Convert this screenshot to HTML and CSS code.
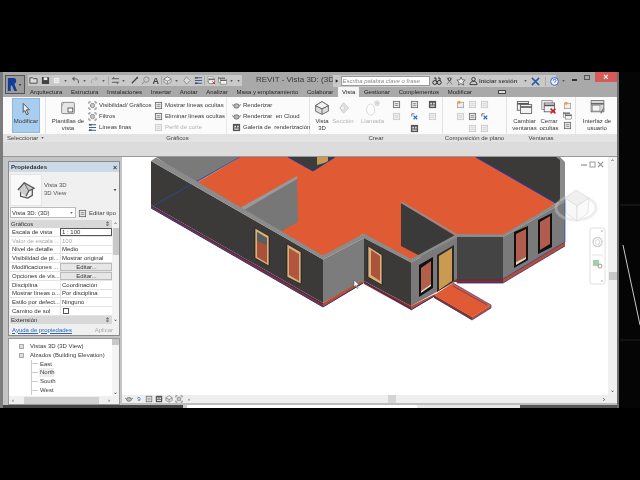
FILE: index.html
```html
<!DOCTYPE html>
<html lang="es">
<head>
<meta charset="utf-8">
<title>REVIT - Vista 3D: (3D)</title>
<link rel="stylesheet" href="styles.css">
</head>
<body>
<svg class="defs" width="0" height="0">
  <defs>
    <symbol id="i-doc" viewBox="0 0 10 10"><rect x="1.5" y="1.5" width="7" height="7" fill="#e8e8e8" stroke="#666" stroke-width=".9"/><path d="M3 4h4M3 6h4" stroke="#777" stroke-width=".8"/></symbol>
    <symbol id="i-dim" viewBox="0 0 10 10"><rect x="1.5" y="1.5" width="7" height="7" fill="#eee" stroke="#c8c8c8" stroke-width=".9"/><path d="M3 4h4M3 6h4" stroke="#d0d0d0" stroke-width=".8"/></symbol>
    <symbol id="i-list" viewBox="0 0 10 10"><path d="M1 2h8M1 5h8M1 8h8" stroke="#3f5f8f" stroke-width="1.2"/><path d="M1 2h3M1 8h3" stroke="#444" stroke-width="1.4"/></symbol>
    <symbol id="i-scan" viewBox="0 0 10 10"><path d="M1 3V1h2M7 1h2v2M9 7v2H7M3 9H1V7" fill="none" stroke="#666" stroke-width=".9"/><circle cx="5" cy="5" r="2.4" fill="#c9c9c9" stroke="#666" stroke-width=".7"/></symbol>
    <symbol id="i-teapot" viewBox="0 0 10 10"><ellipse cx="5" cy="5.5" rx="3" ry="2.4" fill="#bbb" stroke="#555" stroke-width=".8"/><path d="M8 5l2-1M2 5L0 4" stroke="#555" stroke-width=".8"/></symbol>
    <symbol id="i-gallery" viewBox="0 0 10 10"><rect x="1" y="1" width="8" height="8" fill="#555"/><path d="M2.5 3h2v2h-2zM5.5 3h2v2h-2zM2.5 6h5v1.5h-5z" fill="#ddd"/></symbol>
    <symbol id="i-arrow" viewBox="0 0 10 10"><path d="M3 1l4.5 4.6H5.3l1.4 3-1.2.5-1.3-3L3 7.4z" fill="#e8f0f8" stroke="#555" stroke-width=".7"/></symbol>
    <symbol id="i-caret" viewBox="0 0 6 6"><path d="M1.5 2.2h3L3 4z" fill="#333"/></symbol>
    <symbol id="i-win" viewBox="0 0 20 20"><rect x="1" y="3" width="14" height="11" fill="#f0f0f0" stroke="#555"/><path d="M1 6h14" stroke="#555" stroke-width="2"/><rect x="5" y="7" width="14" height="11" fill="#f4f4f4" stroke="#555"/><path d="M5 10h14" stroke="#555" stroke-width="2"/></symbol>
    <symbol id="i-winx" viewBox="0 0 20 20"><rect x="1" y="2" width="13" height="11" fill="#eee" stroke="#888"/><rect x="4" y="5" width="13" height="11" fill="#f2f2f2" stroke="#555"/><path d="M4 8h13" stroke="#555" stroke-width="2"/><path d="M12 12l6 6M18 12l-6 6" stroke="#c8282a" stroke-width="2"/></symbol>
    <symbol id="i-ui" viewBox="0 0 20 20"><rect x="2" y="2" width="16" height="14" fill="#d8d8d8" stroke="#666"/><path d="M2 6h16" stroke="#666" stroke-width="2"/><rect x="4" y="8" width="9" height="7" fill="#f4f4f4" stroke="#888" stroke-width=".7"/><path d="M14 18l4-7" stroke="#777" stroke-width="1.4"/></symbol>
    <symbol id="i-tpl" viewBox="0 0 20 20"><rect x="2" y="3" width="16" height="14" rx="1.5" fill="#e6e6e6" stroke="#777"/><path d="M2 8l3-5" stroke="#999"/><rect x="10" y="10" width="6" height="5" fill="#fff" stroke="#444"/></symbol>
    <symbol id="i-house" viewBox="0 0 20 20"><path d="M10 2L18 7 18 14 10 18 2 14 2 7z" fill="#dcdcdc" stroke="#555"/><path d="M2 7l8 4 8-4M10 11v7" fill="none" stroke="#555"/><path d="M10 2L18 7l-8 4-8-4z" fill="#f2f2f2" stroke="#555"/></symbol>
    <symbol id="i-home" viewBox="0 0 20 20"><path d="M4 10v7l8 2 5-3V9" fill="#f0f0f0" stroke="#555" stroke-width="1.400"/><path d="M1 10l7-8 11 6-6 3-3 6" fill="#ccc" stroke="#555" stroke-width="1.400"/><path d="M8 2l5 9" stroke="#555"/></symbol>
    <symbol id="i-ghost" viewBox="0 0 20 20"><path d="M10 3l7 7-7 7-5-7z" fill="#e4e4e4" stroke="#c4c4c4"/><circle cx="9" cy="10" r="3" fill="#f2f2f2" stroke="#c8c8c8"/></symbol>
    <symbol id="i-call" viewBox="0 0 20 20"><ellipse cx="7" cy="12" rx="5" ry="7" fill="#fff" stroke="#cfcfcf"/><circle cx="15" cy="4" r="3" fill="#eee" stroke="#cfcfcf"/><path d="M13 4h4M15 2v4" stroke="#bbb" stroke-width=".7"/></symbol>
    <symbol id="i-sun" viewBox="0 0 10 10"><rect x="1.5" y="2.5" width="7" height="6" fill="#eee" stroke="#999" stroke-width=".8"/><circle cx="3.5" cy="2.5" r="1.8" fill="#f0a030"/></symbol>
    <symbol id="i-xblue" viewBox="0 0 10 10"><path d="M2 2h3M2 2v3" stroke="#666" stroke-width="1"/><path d="M4 4l4 4M8 4l-4 4" stroke="#2b6fc4" stroke-width="1.4"/></symbol>
  </defs>
</svg>

<div class="screen">
  <div class="window">
    <div class="titlebar">
      <div class="appbtn">
        <svg class="applogo" viewBox="0 0 12 16" width="11" height="15"><path d="M1 15V1h6.5c3 0 3.5 5 .5 6.5l3 7.5H8L5.5 9H4v6z" fill="#123c9c"/></svg>
        <svg class="cr" width="6" height="6"><use href="#i-caret"/></svg>
      </div>
      <div class="qat">
        <svg class="qi" width="9" height="9" viewBox="0 0 10 10"><path d="M1 8V2h3l1 1h4v5z" fill="#ddd" stroke="#444"/></svg>
        <svg class="qi" width="9" height="9" viewBox="0 0 10 10"><path d="M1 1h7l1 1v7H1z" fill="#444"/><rect x="3" y="1.5" width="4" height="3" fill="#eee"/></svg>
        <svg class="qi" width="9" height="9"><use href="#i-dim"/></svg>
        <svg class="qc" width="5" height="6"><use href="#i-caret"/></svg>
        <svg class="qi" width="9" height="9" viewBox="0 0 10 10"><path d="M8 8a4 3.5 0 0 0-4-5H2M4 1L1.8 3 4 5" fill="none" stroke="#666" stroke-width="1.2"/></svg>
        <svg class="qc" width="5" height="6"><use href="#i-caret"/></svg>
        <svg class="qi" width="9" height="9" viewBox="0 0 10 10"><path d="M2 8a4 3.5 0 0 1 4-5h2M6 1l2.200 2L6 5" fill="none" stroke="#aaa" stroke-width="1.200"/></svg>
        <svg class="qc" width="5" height="6"><use href="#i-caret"/></svg>
        <span class="qsep"></span>
        <svg class="qi" width="9" height="9" viewBox="0 0 10 10"><path d="M1 3h8M1 7h8M3 1v2M7 7v2" stroke="#555"/></svg>
        <svg class="qc" width="5" height="6"><use href="#i-caret"/></svg>
        <svg class="qi" width="9" height="9" viewBox="0 0 10 10"><path d="M2 8l6-6" stroke="#444" stroke-width="1.400"/><circle cx="8" cy="2" r="1.200" fill="#555"/></svg>
        <svg class="qi" width="9" height="9" viewBox="0 0 10 10"><circle cx="6" cy="4" r="3" fill="none" stroke="#888"/><path d="M1 9l3-3" stroke="#888"/></svg>
        <span class="qa">A</span>
        <span class="qsep"></span>
        <svg class="qi" width="9" height="9"><use href="#i-house"/></svg>
        <svg class="qc" width="5" height="6"><use href="#i-caret"/></svg>
        <svg class="qi" width="9" height="9" viewBox="0 0 10 10"><path d="M5 1l4 4-4 4-3-4z" fill="#ddd" stroke="#888"/></svg>
        <svg class="qi" width="9" height="9"><use href="#i-list"/></svg>
        <span class="qsep"></span>
        <svg class="qi" width="9" height="9"><use href="#i-winx"/></svg>
        <svg class="qi" width="9" height="9"><use href="#i-win"/></svg>
        <svg class="qc" width="5" height="6"><use href="#i-caret"/></svg>
        <svg class="qc" width="5" height="6"><use href="#i-caret"/></svg>
      </div>
      <div class="wintitle">REVIT - Vista 3D: (3D)</div>
      <div class="infobar">
        <svg class="cr" width="5" height="6" viewBox="0 0 6 6"><path d="M2 1l3 2-3 2z" fill="#222"/></svg>
        <div class="search">Escriba palabra clave o frase</div>
        <svg class="qi" width="10" height="10" viewBox="0 0 10 10"><circle cx="2.800" cy="6.500" r="2" fill="none" stroke="#333"/><circle cx="7.200" cy="6.500" r="2" fill="none" stroke="#333"/><path d="M2 2h2v3M6 2h2v3" stroke="#333" fill="none"/></svg>
        <svg class="qi" width="9" height="10" viewBox="0 0 10 10"><path d="M2 1l6 8M8 1L2 9" stroke="#777"/><circle cx="5" cy="3" r="1.600" fill="none" stroke="#444"/></svg>
        <svg class="qi" width="10" height="10" viewBox="0 0 10 10"><path d="M5 1l1.200 2.800 3 .3-2.300 2 .7 3L5 7.500 2.400 9.100l.7-3-2.300-2 3-.3z" fill="#f2f2f2" stroke="#555" stroke-width=".8"/></svg>
        <svg class="qi" width="9" height="10" viewBox="0 0 10 10"><circle cx="5" cy="3" r="2" fill="none" stroke="#333"/><path d="M1 9c0-5 8-5 8 0z" fill="none" stroke="#333"/></svg>
        <span class="login">Iniciar sesión</span>
        <svg class="qc" width="5" height="6"><use href="#i-caret"/></svg>
        <svg class="qi" width="9" height="9" viewBox="0 0 10 10"><path d="M1 1l8 8M9 1L1 9" stroke="#2f5fa8" stroke-width="1.800"/></svg>
        <span class="qsep qsep-info"></span>
        <svg class="qi" width="9" height="9" viewBox="0 0 10 10"><circle cx="5" cy="5" r="4.300" fill="#eef" stroke="#2a62b8"/><path d="M3.600 4c0-2 3-2 3 0 0 1-1.500 1-1.500 2.200" fill="none" stroke="#2a62b8"/></svg>
        <svg class="qc" width="5" height="6"><use href="#i-caret"/></svg>
      </div>
      <div class="controls">
        <span class="ctl-min"></span>
        <span class="ctl-max"></span>
        <span class="ctl-close">×</span>
      </div>
    </div>

    <nav class="tabs">
      <span class="tab">Arquitectura</span>
      <span class="tab">Estructura</span>
      <span class="tab">Instalaciones</span>
      <span class="tab">Insertar</span>
      <span class="tab">Anotar</span>
      <span class="tab">Analizar</span>
      <span class="tab">Masa y emplazamiento</span>
      <span class="tab">Colaborar</span>
      <span class="tab tab-active">Vista</span>
      <span class="tab">Gestionar</span>
      <span class="tab">Complementos</span>
      <span class="tab">Modificar</span>
      <span class="tabbtn"></span>
    </nav>

    <div class="ribbon">
      <section class="panel p-sel">
        <div class="tools">
          <div class="big big-active">
            <svg width="14" height="14"><use href="#i-arrow"/></svg>
            <span>Modificar</span>
          </div>
        </div>
        <div class="plabel pl-left">Seleccionar <svg width="5" height="6"><use href="#i-caret"/></svg></div>
      </section>

      <section class="panel p-gra">
        <div class="tools">
          <div class="big big-tpl">
            <svg width="18" height="16"><use href="#i-tpl"/></svg>
            <span>Plantillas de<br>vista</span>
          </div>
          <div class="col c1">
            <div class="row"><svg width="9" height="9"><use href="#i-scan"/></svg>Visibilidad/ Gráficos</div>
            <div class="row"><svg width="9" height="9"><use href="#i-scan"/></svg>Filtros</div>
            <div class="row"><svg width="9" height="9"><use href="#i-list"/></svg>Líneas finas</div>
          </div>
          <div class="col c2">
            <div class="row"><svg width="9" height="9"><use href="#i-doc"/></svg>Mostrar líneas ocultas</div>
            <div class="row"><svg width="9" height="9"><use href="#i-doc"/></svg>Eliminar líneas ocultas</div>
            <div class="row dis"><svg width="9" height="9"><use href="#i-dim"/></svg>Perfil de corte</div>
          </div>
          <div class="col c3">
            <div class="row"><svg width="9" height="9"><use href="#i-teapot"/></svg>Renderizar</div>
            <div class="row"><svg width="9" height="9"><use href="#i-teapot"/></svg>Renderizar &nbsp;en Cloud</div>
            <div class="row"><svg width="9" height="9"><use href="#i-gallery"/></svg>Galería de &nbsp;renderización</div>
          </div>
        </div>
        <div class="plabel">Gráficos</div>
      </section>

      <section class="panel p-cre">
        <div class="tools">
          <div class="big big-3d"><svg width="16" height="16"><use href="#i-house"/></svg><span>Vista<br>3D</span></div>
          <div class="big big-sec dis"><svg width="15" height="16"><use href="#i-ghost"/></svg><span>Sección</span></div>
          <div class="big big-call dis"><svg width="16" height="16"><use href="#i-call"/></svg><span>Llamada</span></div>
          <div class="igrid ig-cre">
            <svg width="9" height="9"><use href="#i-doc"/></svg>
            <svg width="9" height="9"><use href="#i-doc"/></svg>
            <svg width="9" height="9"><use href="#i-gallery"/></svg>
            <svg width="9" height="9"><use href="#i-dim"/></svg>
            <svg width="9" height="9"><use href="#i-xblue"/></svg>
            <svg width="9" height="9"><use href="#i-dim"/></svg>
            <span></span>
            <svg width="9" height="9"><use href="#i-gallery"/></svg>
            <span></span>
          </div>
        </div>
        <div class="plabel">Crear</div>
      </section>

      <section class="panel p-com">
        <div class="tools">
          <div class="igrid ig-com">
            <svg width="9" height="9"><use href="#i-sun"/></svg>
            <svg width="9" height="9"><use href="#i-dim"/></svg>
            <svg width="9" height="9"><use href="#i-dim"/></svg>
            <svg width="9" height="9"><use href="#i-dim"/></svg>
            <svg width="9" height="9"><use href="#i-doc"/></svg>
            <svg width="9" height="9"><use href="#i-xblue"/></svg>
            <span></span>
            <svg width="9" height="9"><use href="#i-dim"/></svg>
            <svg width="9" height="9"><use href="#i-dim"/></svg>
          </div>
        </div>
        <div class="plabel">Composición de plano</div>
      </section>

      <section class="panel p-ven">
        <div class="tools">
          <div class="big big-cam"><svg width="17" height="16"><use href="#i-win"/></svg><span>Cambiar<br>ventanas</span></div>
          <div class="big big-cer"><svg width="16" height="16"><use href="#i-winx"/></svg><span>Cerrar<br>ocultas</span></div>
          <div class="col c-ven">
            <svg width="9" height="9"><use href="#i-sun"/></svg>
            <svg width="9" height="9"><use href="#i-win"/></svg>
            <svg width="9" height="9"><use href="#i-doc"/></svg>
          </div>
        </div>
        <div class="plabel">Ventanas</div>
      </section>

      <section class="panel p-int">
        <div class="tools">
          <div class="big big-int"><svg width="17" height="16"><use href="#i-ui"/></svg><span>Interfaz de<br>usuario</span></div>
        </div>
        <div class="plabel"></div>
      </section>
    </div>

    <div class="ctxstrip"></div>

    <div class="workspace">
      <aside class="sidebar">
        <div class="props">
          <div class="props-head"><b>Propiedades</b><span class="x">×</span></div>
          <div class="preview">
            <div class="tile"><svg width="18" height="18"><use href="#i-home"/></svg></div>
            <div class="pv-text">Vista 3D<br>3D View</div>
            <svg class="pv-caret" width="6" height="6"><use href="#i-caret"/></svg>
          </div>
          <div class="typeline">
            <div class="select">Vista 3D: (3D)<svg width="5" height="6"><use href="#i-caret"/></svg></div>
            <div class="edittype"><svg width="9" height="9"><use href="#i-doc"/></svg>Editar tipo</div>
          </div>
          <div class="grid-wrap">
            <div class="params">
              <div class="section">Gráficos<span>⇕</span></div>
              <div class="param"><span>Escala de vista</span><span class="val val-input">1 : 100</span></div>
              <div class="param dis"><span>Valor de escala ...</span><span class="val">100</span></div>
              <div class="param"><span>Nivel de detalle</span><span class="val">Medio</span></div>
              <div class="param"><span>Visibilidad de pi...</span><span class="val">Mostrar original</span></div>
              <div class="param"><span>Modificaciones ...</span><span class="val val-btn">Editar...</span></div>
              <div class="param"><span>Opciones de vis...</span><span class="val val-btn">Editar...</span></div>
              <div class="param"><span>Disciplina</span><span class="val">Coordinación</span></div>
              <div class="param"><span>Mostrar líneas o...</span><span class="val">Por disciplina</span></div>
              <div class="param"><span>Estilo por defect...</span><span class="val">Ninguno</span></div>
              <div class="param"><span>Camino de sol</span><span class="val"><i class="check"></i></span></div>
              <div class="section">Extensión<span>⇕</span></div>
            </div>
            <div class="pscroll"><span class="up">⌃</span><span class="thumb"></span><span class="down">⌄</span></div>
          </div>
          <div class="helpline"><a>Ayuda de propiedades</a><span class="apply">Aplicar</span></div>
        </div>
        <div class="browser">
          <div class="tree-wrap">
            <ul class="tree">
              <li class="l1"><i class="plus"></i>Vistas 3D (3D View)</li>
              <li class="l1"><i class="plus"></i>Alzados (Building Elevation)</li>
              <li class="l2">East</li>
              <li class="l2 sel">North</li>
              <li class="l2">South</li>
              <li class="l2">West</li>
            </ul>
            <div class="bscroll"><span class="bthumb"></span><span class="down">⌄</span></div>
          </div>
          <div class="hscroll"><span>‹</span><i></i><span>›</span></div>
        </div>
      </aside>

      <main class="viewarea">
        <div class="viewrow">
          <svg class="model" width="486" height="238" viewBox="122 157 486 238">
            <!-- back-left room -->
            <polygon points="156,157 240,157 195,184" fill="#7a7a7a"/>
            <!-- floor -->
            <polygon points="195,184 240,157 476,157 557,203 503,236 457,236 411,262 363,234 323,259" fill="#e05a33"/>
            <!-- inset at the back -->
            <polygon points="288,157 335,157 313,171" fill="#3c3c3c"/>
            <polygon points="317,157 328,157 328,162 317,165" fill="#c49a55"/>
            <path d="M288,157 313,171 335,157" fill="none" stroke="#1d3a96" stroke-width="1"/>
            <!-- back-right wall -->
            <polygon points="476,157 560,157 560,202 556,203" fill="#3b3a39"/>
            <path d="M476,157 556,203" stroke="#1d3a96" stroke-width="1.200"/>
            <polygon points="556,157 560,157 565,162 565,198 560,202 560,160" fill="#8a8a8a"/>
            <!-- inner walls -->
            <polygon points="240,208 297,177 298,222 280,232" fill="#777"/>
            <polygon points="240,208 297,176 297,179 244,210" fill="#9a9a9a"/>
            <polygon points="401,203 457,237 422,257 401,246" fill="#3a3a3a"/>
            <path d="M401,202 457,235" stroke="#8f8f8f" stroke-width="2"/>
            <!-- left big wall -->
            <polygon points="151,161 323,259.500 323,303 151,205" fill="#3b3a39"/>
            <polygon points="151,205 323,303 323,307 151,208" fill="#8e2f1f"/>
            <path d="M151,206 323,304M151,208 323,307" stroke="#1d2f8e" stroke-width=".9" fill="none"/>
            <!-- blue line over left room -->
            <path d="M151,207 240,157" stroke="#2a4ba8" stroke-width=".8" fill="none"/>
            <!-- wall top stripe -->
            <polygon points="151,161 156,157.500 323,255.500 364,233.500 411,259 457,234 503,234.500 565,198 565,201.500 503,237 457,237 411,262.500 364,238 323,259.500" fill="#8b8b8b"/>
            <!-- gray face -->
            <polygon points="323,259.500 364,238 364,281 323,303" fill="#7c7c7c"/>
            <polygon points="323,303 356,284 364,281 364,283 323,307" fill="#c2492a"/>
            <path d="M323,307 363,283" stroke="#1d3a96" stroke-width="1"/>
            <!-- next dark face -->
            <polygon points="364,238 411,262.500 411,306 364,281" fill="#3b3a39"/>
            <polygon points="364,281 411,306 411,310 364,284" fill="#8e2f1f"/>
            <path d="M364,282 411,309" stroke="#1d2f8e" stroke-width="1"/>
            <!-- door face -->
            <polygon points="411,262.500 457,237 457,281 411,306" fill="#7a7a7a"/>
            <polygon points="411,306 435,294 434,297 411,310" fill="#c2492a"/>
            <path d="M411,310 434,296" stroke="#1d3a96" stroke-width="1"/>
            <!-- octagon faces -->
            <polygon points="457,237 503,237 503,279 457,279" fill="#444"/>
            <polygon points="453,281 457,279 503,279 503,283 458,283" fill="#8e2f1f"/>
            <path d="M457,280 503,280M457,283 503,283" stroke="#1d2f8e" stroke-width=".8"/>
            <polygon points="503,237 565,201.500 565,242 503,279" fill="#7a7a7a"/>
            <polygon points="503,279 565,242 565,246 503,283" fill="#c2492a"/>
            <path d="M503,279 565,242M503,283 565,246" stroke="#1d3a96" stroke-width=".8"/>
            <path d="M565,199V242" stroke="#2a4ba8" stroke-width=".7"/>
            <!-- windows -->
            <polygon points="255,228 269,236 269,266 255,258" fill="#d8b27a" stroke="#111" stroke-width=".6"/>
            <polygon points="257,232 267,238 267,263 257,257" fill="#a9513c"/>
            <polygon points="257,232 267,238 267,245 257,241" fill="#55605f"/>
            <polygon points="287,244 301,252 301,284 287,277" fill="#d8b27a" stroke="#111" stroke-width=".6"/>
            <polygon points="289,248 299,254 299,281 289,275" fill="#b2553e"/>
            <polygon points="368,246 382,255 382,285 368,277" fill="#d8b27a" stroke="#111" stroke-width=".6"/>
            <polygon points="371,250 380,256 380,281 371,275" fill="#ad533c"/>
            <polygon points="419,265 433,257 433,288 419,297" fill="#111"/>
            <polygon points="421,268 431,261 431,284 421,291" fill="#b2604c"/>
            <polygon points="421,291 431,284 431,286 421,293" fill="#e6d8c0"/>
            <polygon points="437,255 454,245 454,281 437,292" fill="#2a2a2a"/>
            <polygon points="439,256 452,248 452,281 439,290" fill="#c99a50"/>
            <polygon points="514,232 528,226 528,260 514,268" fill="#111"/>
            <polygon points="516,234 526,229 526,257 516,262" fill="#b25c50"/>
            <polygon points="516,262 526,257 526,259 516,265" fill="#e6d8c0"/>
            <polygon points="538,220 552,213 552,247 538,254" fill="#111"/>
            <polygon points="540,222 550,216 550,244 540,250" fill="#b25c50"/>
            <!-- ramp -->
            <polygon points="434,295 453,283 491,305 472,317" fill="#e05a33"/>
            <polygon points="434,295 472,317 472,320 434,298" fill="#8e2f1f"/>
            <polygon points="472,317 491,305 491,308 472,320" fill="#c2492a"/>
            <path d="M434,297 472,320 491,308V305L453,283M453,286 487,305" fill="none" stroke="#27409f" stroke-width=".7"/>
            <!-- view cube -->
            <g opacity=".4">
              <ellipse cx="576" cy="208" rx="20" ry="12" fill="none" stroke="#d5d5d5" stroke-width="3"/>
              <polygon points="576,190 589,198 577,206 565,198" fill="#dcdcdc" stroke="#999" stroke-width=".6"/>
              <polygon points="565,198 577,206 577,221 566,213" fill="#eee" stroke="#999" stroke-width=".6"/>
              <polygon points="589,198 577,206 577,221 588,213" fill="#f4f4f4" stroke="#999" stroke-width=".6"/>
            </g>
            <!-- canvas window buttons -->
            <path d="M581,165h6" stroke="#aaa" stroke-width="1.600"/>
            <rect x="590" y="162" width="5" height="5" fill="none" stroke="#999"/>
            <path d="M598,162l5,5M603,162l-5,5" stroke="#999" stroke-width="1.200"/>
            <!-- navigation bar -->
            <rect x="590" y="228" width="15" height="56" rx="2" fill="#fff" stroke="#e0e0e0"/>
            <circle cx="597.500" cy="242" r="4.500" fill="none" stroke="#d0d0d0" stroke-width="1.400"/>
            <circle cx="597.500" cy="242" r="2.400" fill="none" stroke="#d8d8d8"/>
            <path d="M592,255h11" stroke="#e4e4e4"/>
            <rect x="593" y="260" width="6" height="6" fill="#a5cfa5"/>
            <circle cx="600" cy="266" r="2" fill="none" stroke="#999"/>
            <circle cx="602" cy="231" r="1.200" fill="#d8d8d8"/>
            <circle cx="602" cy="281" r="1.200" fill="#d8d8d8"/>
            <!-- mouse pointer -->
            <path d="M354,280l0,7 1.800,-1.500 1.400,3 1,-.5 -1.400,-3 2.400,0z" fill="#fff" stroke="#444" stroke-width=".5"/>
          </svg>
          <div class="vscroll"><span class="up">⌃</span><span class="vthumb"></span><span class="down">⌄</span></div>
        </div>
        <div class="statusbar">
          <svg width="8" height="8"><use href="#i-teapot"/></svg>
          <span class="scale">9</span>
          <svg width="8" height="8"><use href="#i-doc"/></svg>
          <svg width="8" height="8"><use href="#i-gallery"/></svg>
          <svg width="8" height="8"><use href="#i-house"/></svg>
          <svg width="8" height="8"><use href="#i-scan"/></svg>
          <span class="lt">‹</span>
          <span class="sthumb"></span>
          <span class="gt">›</span>
        </div>
      </main>
    </div>
    <div class="taskstrip"></div>
  </div>
  <svg class="desktop" width="21" height="336" viewBox="619 72 21 336">
    <path d="M623,245 640,325" stroke="#c8c8c8" stroke-width="1"/>
    <path d="M620,205H640M620,340H640" stroke="#222" stroke-width="1"/>
  </svg>
</div>
</body>
</html>
```

FILE: styles.css
```css
* { box-sizing: border-box; }
html, body { margin: 0; padding: 0; background: #000; }
body { width: 640px; height: 480px; overflow: hidden; font-family: "Liberation Sans", Arial, sans-serif; font-size: 6px; line-height: 1; color: #3a3a3a; }
.defs { display: block; width: 0; height: 0; }
svg { display: block; flex: none; }
.dis { color: #b4b4b4; }

.screen { display: flex; padding-top: 72px; }
.window { width: 619px; height: 336px; flex: none; display: flex; flex-direction: column; background: #b8b8b8; border-left: 3px solid #7c7c7c; border-right: 2px solid #6d6d6d; filter: blur(.3px); overflow: hidden; }

/* title bar */
.titlebar { height: 15px; display: flex; background: #a9a9a9; flex: none; position: relative; }
.appbtn { width: 20px; height: 19px; margin: 3px 0 0 2px; background: #9b9b9b; border: 1px solid #555; display: flex; align-items: center; padding-left: 1px; flex: none; position: relative; z-index: 1; }
.appbtn .cr { margin-left: -1px; }
.qat { margin: 3px 0 0 3px; width: 214px; height: 11px; background: #c9c9c9; display: flex; align-items: center; gap: 2.500px; padding-left: 1px; flex: none; }
.qc { margin: 0 1px 0 -1px; }
.qsep { width: 1px; height: 9px; background: #aaa; margin: 0 -1px; flex: none; }
.qa { font: bold 9px "Liberation Sans", sans-serif; color: #444; }
.wintitle { width: 91px; padding: 4px 0 0 14px; font-size: 8px; color: #3a3a3a; white-space: nowrap; flex: none; }
.infobar { width: 223px; height: 12px; margin-top: 3px; background: #c9c9c9; display: flex; align-items: center; gap: 2.500px; flex: none; padding-left: 1px; }
.infobar .cr { margin-right: -1px; }
.search { width: 89px; height: 10px; background: #fff; border: 1px solid #999; font-style: italic; color: #8a8a8a; padding: 1px 0 0 1px; white-space: nowrap; flex: none; }
.login { font-weight: bold; color: #444; margin: 0 4px 0 -1px; white-space: nowrap; }
.qsep-info { margin: 0 2px; }
.controls { margin-left: auto; display: flex; align-items: flex-start; }
.ctl-min { width: 5px; height: 1.500px; background: #333; margin: 7px 7px 0 0; }
.ctl-max { width: 6px; height: 5px; border: 1px solid #555; margin: 3px 5px 0 0; }
.ctl-close { width: 22px; height: 10px; background: #d65a57; color: #fff; font-size: 9px; font-weight: bold; text-align: center; line-height: 10px; }

/* tabs */
.tabs { height: 10px; display: flex; align-items: center; gap: 8.700px; background: #a9a9a9; padding-left: 27px; flex: none; }
.tab { white-space: nowrap; color: #222; height: 10px; line-height: 11px; }
.tab-active { background: #f5f5f5; padding: 0 4px; margin: 0 -4px; }
.tabbtn { width: 8px; height: 4px; background: #ddd; border: 1px solid #444; margin-left: 17px; }

/* ribbon */
.ribbon { height: 45px; display: flex; background: #fbfbfb; flex: none; }
.panel { display: flex; flex-direction: column; border-right: 1px solid #e4e4e4; flex: none; }
.tools { height: 37px; display: flex; flex: none; }
.plabel { height: 8px; background: #e3e3e3; text-align: center; line-height: 8px; color: #444; display: flex; justify-content: center; align-items: center; gap: 2px; white-space: nowrap; }
.pl-left { justify-content: flex-start; padding-left: 4px; }
.p-sel { width: 43px; }
.p-gra { width: 264px; }
.p-cre { width: 133px; }
.p-com { width: 64px; }
.p-ven { width: 69px; }
.p-int { flex: 1; border-right: 0; }

.big { display: flex; flex-direction: column; align-items: center; text-align: center; white-space: nowrap; line-height: 7px; flex: none; }
.big span { display: block; }
.big-active { width: 28px; height: 35px; margin: 1px 0 0 9px; background: #a9cdee; border: 1px solid #8fb8de; padding-top: 3px; gap: 2px; }
.big-tpl { width: 36px; margin-left: 4px; padding-top: 3px; gap: 2px; }
.col { display: flex; flex-direction: column; justify-content: space-between; padding: 3px 0 2px; flex: none; }
.row { display: flex; align-items: center; gap: 2px; white-space: nowrap; height: 10px; }
.c1 { width: 66px; margin-left: 2px; }
.c2 { width: 73px; border-right: 1px solid #e8e8e8; }
.c3 { width: 78px; padding-left: 5px; }
.big-3d { width: 16px; margin-left: 4px; padding-top: 3px; gap: 2px; }
.big-sec { width: 20px; margin-left: 3px; padding-top: 3px; gap: 2px; }
.big-call { width: 25px; margin-left: 7px; padding-top: 3px; gap: 2px; }
.igrid { display: grid; grid-template-columns: repeat(3, 9px); grid-auto-rows: 9px; gap: 3px 9px; padding-top: 3px; flex: none; }
.ig-cre { margin-left: 7px; }
.ig-com { margin-left: 13px; gap: 3px; }
.big-cam { width: 25px; margin-left: 5px; padding-top: 2px; gap: 3px; }
.big-cer { width: 18px; margin-left: 3px; padding-top: 2px; gap: 3px; }
.c-ven { margin-left: 5px; padding: 4px 0 4px; }
.big-int { width: 30px; margin-left: 6px; padding-top: 2px; gap: 3px; }

.ctxstrip { height: 15px; background: #dcdcdc; flex: none; border-bottom: 1px solid #999; }

/* workspace */
.workspace { flex: 1; display: flex; min-height: 0; }
.sidebar { width: 119px; flex: none; padding: 4px 2px 0 5px; display: flex; flex-direction: column; gap: 2px; background: #c4c4c4; }
.props { height: 175px; background: #f0f0f0; border: 1px solid #8a8a8a; display: flex; flex-direction: column; flex: none; }
.props-head { height: 10px; background: #ccd9e6; display: flex; justify-content: space-between; align-items: center; padding: 0 2px; color: #333; flex: none; }
.props-head .x { font-size: 7px; font-weight: bold; }
.preview { height: 33px; display: flex; align-items: center; position: relative; margin: 1px 0 0 1px; flex: none; }
.tile { width: 32px; height: 32px; background: #f9f9f9; border: 1px solid #e4e4e4; display: flex; align-items: center; justify-content: center; }
.pv-text { margin-left: 2px; line-height: 7.500px; color: #555; }
.pv-caret { margin-left: auto; margin-right: 1px; }
.typeline { height: 13px; display: flex; gap: 2px; padding: 1px 0 0 1px; flex: none; }
.select { width: 66px; height: 11px; background: #fff; border: 1px solid #bbb; display: flex; justify-content: space-between; align-items: center; padding: 0 1px 0 1px; color: #333; }
.edittype { display: flex; align-items: center; gap: 2px; white-space: nowrap; color: #444; }
.grid-wrap { height: 104px; display: flex; margin-top: 1px; flex: none; }
.params { width: 103px; padding-left: 1px; flex: none; }
.section { height: 8px; background: #d8d8d8; display: flex; justify-content: space-between; align-items: center; padding: 0 2px 0 1px; color: #333; }
.param { height: 8.800px; display: grid; grid-template-columns: 50px 1fr; background: #fff; border-bottom: 1px solid #e4e4e4; align-items: center; white-space: nowrap; color: #333; overflow: hidden; }
.param > span:first-child { padding-left: 2px; overflow: hidden; }
.param.dis { color: #a8a8a8; }
.val { padding-left: 1px; height: 100%; display: flex; align-items: center; border-left: 1px solid #e4e4e4; }
.val-input { border: 1px solid #555; }
.val-btn { background: #e6e6e6; border: 1px solid #bbb; justify-content: center; }
.check { width: 6px; height: 6px; border: 1px solid #555; background: #fff; display: block; margin-left: 1px; }
.pscroll { flex: 1; display: flex; flex-direction: column; align-items: center; background: #f2f2f2; font-size: 6px; }
.pscroll .up { height: 8px; line-height: 10px; }
.pscroll .thumb { width: 6px; height: 27px; background: #c8c8c8; }
.pscroll .down { margin-top: auto; height: 8px; }
.helpline { height: 11px; display: flex; justify-content: space-between; align-items: center; padding: 0 6px 0 3px; flex: none; }
.helpline a { color: #2a66b8; text-decoration: underline; }
.apply { color: #aaa; }

.browser { flex: 1; min-height: 0; background: #fff; border: 1px solid #999; display: flex; flex-direction: column; overflow: hidden; }
.tree-wrap { flex: 1; display: flex; min-height: 0; }
.tree { list-style: none; margin: 0; padding: 3px 0 0 0; flex: 1; color: #3a3a3a; }
.tree li { height: 8.800px; line-height: 8.800px; white-space: nowrap; }
.l1 { padding-left: 10px; display: flex; align-items: center; gap: 6px; }
.l2 { padding-left: 31px; background: linear-gradient(#ccc, #ccc) 22px 50% / 7px 1px no-repeat, linear-gradient(#ccc, #ccc) 22px 0 / 1px 100% no-repeat; }
.sel { background: linear-gradient(#eee, #eee) 30px 0 / 15px 100% no-repeat, linear-gradient(#ccc, #ccc) 22px 50% / 7px 1px no-repeat, linear-gradient(#ccc, #ccc) 22px 0 / 1px 100% no-repeat; }
.plus { width: 5px; height: 5px; background: #ddd; border: 1px solid #aaa; display: block; }
.bscroll { width: 7px; display: flex; flex-direction: column; background: #f4f4f4; align-items: center; }
.bthumb { width: 7px; height: 6px; background: #c8c8c8; }
.bscroll .down { margin-top: auto; height: 7px; }
.hscroll { height: 8px; flex: none; display: flex; align-items: center; justify-content: space-between; background: #f0f0f0; padding: 0 9px 0 3px; position: relative; }
.hscroll i { width: 75px; height: 7px; background: #d0d0d0; display: block; }

.viewarea { flex: 1; display: flex; flex-direction: column; min-width: 0; background: #fff; }
.viewrow { flex: 1; display: flex; min-height: 0; }
.model { background: #fff; }
.vscroll { flex: 1; background: #f0f0f0; display: flex; flex-direction: column; align-items: center; }
.vscroll .up { height: 8px; line-height: 10px; }
.vthumb { width: 8px; height: 8px; background: #c8c8c8; margin-top: 107px; }
.vscroll .down { margin-top: auto; height: 8px; }
.statusbar { height: 10px; flex: none; background: #eee; border-bottom: 2px solid #bdbdbd; display: flex; align-items: center; gap: 2px; padding-left: 3px; position: relative; }
.scale { color: #2a62b8; width: 8px; text-align: center; }
.lt { margin-left: 3px; }
.sthumb { width: 8px; height: 8px; background: #d4d4d4; margin-left: 196px; }
.gt { margin-left: auto; margin-right: 12px; font-size: 7px; }
.taskstrip { height: 3px; flex: none; background: linear-gradient(90deg, #444 0 180px, #ccc 180px 184px, #fff 184px 414px, #e8e8e8 414px 517px, #555 517px); }

.desktop { background: #050505; flex: none; }
```
